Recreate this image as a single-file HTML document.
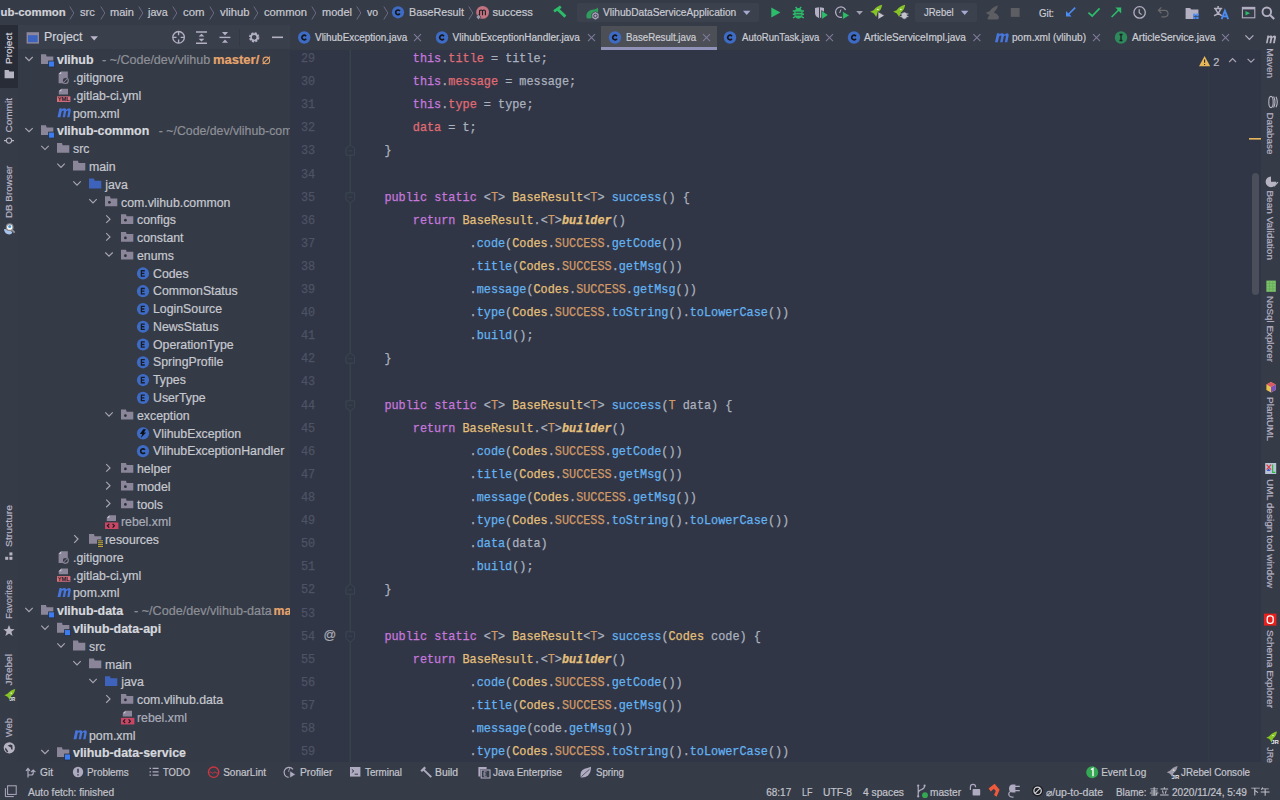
<!DOCTYPE html>
<html><head><meta charset="utf-8"><style>
html,body{margin:0;padding:0;width:1280px;height:800px;overflow:hidden;background:#313646;}
body{position:relative;font-family:"Liberation Sans",sans-serif;}
.t{position:absolute;white-space:pre;transform-origin:0 0;-webkit-text-stroke:0.2px;}
.m{position:absolute;white-space:pre;font-family:"Liberation Mono",monospace;-webkit-text-stroke:0.25px;}
</style></head><body>
<div style="position:absolute;left:0px;top:0px;width:1280px;height:25px;background:#363b48;"></div><div style="position:absolute;left:0px;top:25px;width:18px;height:737px;background:#363b48;"></div><div style="position:absolute;left:0px;top:25px;width:18px;height:63px;background:#282c36;"></div><div style="position:absolute;left:18px;top:25px;width:272px;height:24px;background:#3a3f4c;"></div><div style="position:absolute;left:18px;top:49px;width:272px;height:713px;background:#353a47;"></div><div style="position:absolute;left:290px;top:25px;width:971px;height:25px;background:#363b48;"></div><div style="position:absolute;left:290px;top:50px;width:971px;height:712px;background:#313646;"></div><div style="position:absolute;left:1261px;top:25px;width:19px;height:737px;background:#363b48;"></div><div style="position:absolute;left:0px;top:762px;width:1280px;height:38px;background:#363b48;"></div><div class="t" style="left:0.50px;top:5.68px;font-size:11.4px;line-height:12.736px;color:#d0d2d8;font-weight:bold;">ub-common</div><div class="t" style="left:80.00px;top:5.86px;font-size:11.2px;line-height:12.512px;color:#c8cad0;">src</div><div class="t" style="left:110.00px;top:5.86px;font-size:11.2px;line-height:12.512px;color:#c8cad0;transform:scaleX(0.9875);">main</div><div class="t" style="left:148.27px;top:5.86px;font-size:11.2px;line-height:12.512px;color:#c8cad0;transform:scaleX(0.9575);">java</div><div class="t" style="left:183.00px;top:5.86px;font-size:11.2px;line-height:12.512px;color:#c8cad0;transform:scaleX(1.0157);">com</div><div class="t" style="left:219.50px;top:5.86px;font-size:11.2px;line-height:12.512px;color:#c8cad0;transform:scaleX(1.0072);">vlihub</div><div class="t" style="left:264.00px;top:5.86px;font-size:11.2px;line-height:12.512px;color:#c8cad0;">common</div><div class="t" style="left:322.00px;top:5.86px;font-size:11.2px;line-height:12.512px;color:#c8cad0;transform:scaleX(0.9830);">model</div><div class="t" style="left:367.00px;top:5.86px;font-size:11.2px;line-height:12.512px;color:#c8cad0;transform:scaleX(0.9309);">vo</div><div class="t" style="left:408.50px;top:5.86px;font-size:11.2px;line-height:12.512px;color:#c8cad0;transform:scaleX(0.9601);">BaseResult</div><div class="t" style="left:492.50px;top:5.86px;font-size:11.2px;line-height:12.512px;color:#c8cad0;">success</div><svg style="position:absolute;left:69px;top:5px;" width="6" height="16" viewBox="0 0 6 16"><path d="M0.8 1.5 L4.8 8 L0.8 14.5" fill="none" stroke="#6c6a84" stroke-width="1"/></svg><svg style="position:absolute;left:100px;top:5px;" width="6" height="16" viewBox="0 0 6 16"><path d="M0.8 1.5 L4.8 8 L0.8 14.5" fill="none" stroke="#6c6a84" stroke-width="1"/></svg><svg style="position:absolute;left:138px;top:5px;" width="6" height="16" viewBox="0 0 6 16"><path d="M0.8 1.5 L4.8 8 L0.8 14.5" fill="none" stroke="#6c6a84" stroke-width="1"/></svg><svg style="position:absolute;left:172px;top:5px;" width="6" height="16" viewBox="0 0 6 16"><path d="M0.8 1.5 L4.8 8 L0.8 14.5" fill="none" stroke="#6c6a84" stroke-width="1"/></svg><svg style="position:absolute;left:209px;top:5px;" width="6" height="16" viewBox="0 0 6 16"><path d="M0.8 1.5 L4.8 8 L0.8 14.5" fill="none" stroke="#6c6a84" stroke-width="1"/></svg><svg style="position:absolute;left:253px;top:5px;" width="6" height="16" viewBox="0 0 6 16"><path d="M0.8 1.5 L4.8 8 L0.8 14.5" fill="none" stroke="#6c6a84" stroke-width="1"/></svg><svg style="position:absolute;left:311px;top:5px;" width="6" height="16" viewBox="0 0 6 16"><path d="M0.8 1.5 L4.8 8 L0.8 14.5" fill="none" stroke="#6c6a84" stroke-width="1"/></svg><svg style="position:absolute;left:356px;top:5px;" width="6" height="16" viewBox="0 0 6 16"><path d="M0.8 1.5 L4.8 8 L0.8 14.5" fill="none" stroke="#6c6a84" stroke-width="1"/></svg><svg style="position:absolute;left:383px;top:5px;" width="6" height="16" viewBox="0 0 6 16"><path d="M0.8 1.5 L4.8 8 L0.8 14.5" fill="none" stroke="#6c6a84" stroke-width="1"/></svg><svg style="position:absolute;left:468px;top:5px;" width="6" height="16" viewBox="0 0 6 16"><path d="M0.8 1.5 L4.8 8 L0.8 14.5" fill="none" stroke="#6c6a84" stroke-width="1"/></svg><div style="position:absolute;left:577px;top:3px;width:182px;height:19px;background:#3c414e;border-radius:2px;"></div><div class="t" style="left:602.80px;top:6.04px;font-size:11px;line-height:12.289px;color:#c9ccd3;transform:scaleX(0.9229);">VlihubDataServiceApplication</div><div style="position:absolute;left:915px;top:3px;width:62px;height:19px;background:#3c414e;border-radius:2px;"></div><div class="t" style="left:924.30px;top:6.04px;font-size:11px;line-height:12.289px;color:#c9ccd3;transform:scaleX(0.8639);">JRebel</div><div class="t" style="left:1038.60px;top:6.54px;font-size:11px;line-height:12.289px;color:#c9ccd3;transform:scaleX(0.8769);">Git:</div><div class="t" style="left:43.60px;top:30.74px;font-size:12px;line-height:13.406px;color:#cfd1d7;transform:scaleX(1.0289);">Project</div><div style="position:absolute;left:601px;top:26px;width:116px;height:21px;background:#4c4f56;"></div><div style="position:absolute;left:601px;top:47px;width:116px;height:3px;background:#9192b8;"></div><div class="t" style="left:315.20px;top:31.95px;font-size:10px;line-height:11.172px;color:#cbcdd3;transform:scaleX(0.9946);">VlihubException.java</div><div class="t" style="left:452.60px;top:31.95px;font-size:10px;line-height:11.172px;color:#cbcdd3;">VlihubExceptionHandler.java</div><div class="t" style="left:626.00px;top:31.95px;font-size:10px;line-height:11.172px;color:#cbcdd3;transform:scaleX(0.9710);">BaseResult.java</div><div class="t" style="left:742.00px;top:31.95px;font-size:10px;line-height:11.172px;color:#cbcdd3;transform:scaleX(0.9597);">AutoRunTask.java</div><div class="t" style="left:864.40px;top:31.95px;font-size:10px;line-height:11.172px;color:#cbcdd3;transform:scaleX(1.0079);">ArticleServiceImpl.java</div><div class="t" style="left:1012.20px;top:31.95px;font-size:10px;line-height:11.172px;color:#cbcdd3;transform:scaleX(1.0089);">pom.xml (vlihub)</div><div class="t" style="left:1132.00px;top:31.95px;font-size:10px;line-height:11.172px;color:#cbcdd3;transform:scaleX(1.0134);">ArticleService.java</div><div style="position:absolute;left:18px;top:49px;width:272px;height:713px;overflow:hidden"><div class="t" style="left:39.00px;top:5.27px;font-size:12.4px;line-height:13.853px;color:#d6d8dd;font-weight:bold;">vlihub</div><div class="t" style="left:83.75px;top:5.37px;font-size:12.3px;line-height:13.741px;color:#8d9096;transform:scaleX(1.0185);">- ~/Code/dev/vlihub</div><div class="t" style="left:194.50px;top:5.37px;font-size:12.3px;line-height:13.741px;color:#e5a46b;font-weight:bold;transform:scaleX(1.0574);">master/</div><div class="t" style="left:55.00px;top:23.14px;font-size:12.3px;line-height:13.741px;color:#c6c9cf;">.gitignore</div><div class="t" style="left:55.00px;top:40.91px;font-size:12.3px;line-height:13.741px;color:#c6c9cf;">.gitlab-ci.yml</div><div class="t" style="left:55.00px;top:58.68px;font-size:12.3px;line-height:13.741px;color:#c6c9cf;">pom.xml</div><div class="t" style="left:39.00px;top:76.35px;font-size:12.4px;line-height:13.853px;color:#d6d8dd;font-weight:bold;">vlihub-common</div><div class="t" style="left:140.80px;top:76.45px;font-size:12.3px;line-height:13.741px;color:#8d9096;">- ~/Code/dev/vlihub-common</div><div class="t" style="left:55.00px;top:94.22px;font-size:12.3px;line-height:13.741px;color:#c6c9cf;">src</div><div class="t" style="left:71.00px;top:111.99px;font-size:12.3px;line-height:13.741px;color:#c6c9cf;">main</div><div class="t" style="left:87.31px;top:129.76px;font-size:12.3px;line-height:13.741px;color:#c6c9cf;">java</div><div class="t" style="left:103.00px;top:147.53px;font-size:12.3px;line-height:13.741px;color:#c6c9cf;">com.vlihub.common</div><div class="t" style="left:119.00px;top:165.30px;font-size:12.3px;line-height:13.741px;color:#c6c9cf;">configs</div><div class="t" style="left:119.00px;top:183.07px;font-size:12.3px;line-height:13.741px;color:#c6c9cf;">constant</div><div class="t" style="left:119.00px;top:200.84px;font-size:12.3px;line-height:13.741px;color:#c6c9cf;">enums</div><div class="t" style="left:135.00px;top:218.61px;font-size:12.3px;line-height:13.741px;color:#c6c9cf;">Codes</div><div class="t" style="left:135.00px;top:236.38px;font-size:12.3px;line-height:13.741px;color:#c6c9cf;">CommonStatus</div><div class="t" style="left:135.00px;top:254.15px;font-size:12.3px;line-height:13.741px;color:#c6c9cf;">LoginSource</div><div class="t" style="left:135.00px;top:271.92px;font-size:12.3px;line-height:13.741px;color:#c6c9cf;">NewsStatus</div><div class="t" style="left:135.00px;top:289.69px;font-size:12.3px;line-height:13.741px;color:#c6c9cf;">OperationType</div><div class="t" style="left:135.00px;top:307.46px;font-size:12.3px;line-height:13.741px;color:#c6c9cf;">SpringProfile</div><div class="t" style="left:135.00px;top:325.23px;font-size:12.3px;line-height:13.741px;color:#c6c9cf;">Types</div><div class="t" style="left:135.00px;top:343.00px;font-size:12.3px;line-height:13.741px;color:#c6c9cf;">UserType</div><div class="t" style="left:119.00px;top:360.77px;font-size:12.3px;line-height:13.741px;color:#c6c9cf;">exception</div><div class="t" style="left:135.00px;top:378.54px;font-size:12.3px;line-height:13.741px;color:#c6c9cf;">VlihubException</div><div class="t" style="left:135.00px;top:396.31px;font-size:12.3px;line-height:13.741px;color:#c6c9cf;">VlihubExceptionHandler</div><div class="t" style="left:119.00px;top:414.08px;font-size:12.3px;line-height:13.741px;color:#c6c9cf;">helper</div><div class="t" style="left:119.00px;top:431.85px;font-size:12.3px;line-height:13.741px;color:#c6c9cf;">model</div><div class="t" style="left:119.00px;top:449.62px;font-size:12.3px;line-height:13.741px;color:#c6c9cf;">tools</div><div class="t" style="left:103.00px;top:467.39px;font-size:12.3px;line-height:13.741px;color:#a9adb8;">rebel.xml</div><div class="t" style="left:87.00px;top:485.16px;font-size:12.3px;line-height:13.741px;color:#c6c9cf;">resources</div><div class="t" style="left:55.00px;top:502.93px;font-size:12.3px;line-height:13.741px;color:#c6c9cf;">.gitignore</div><div class="t" style="left:55.00px;top:520.70px;font-size:12.3px;line-height:13.741px;color:#c6c9cf;">.gitlab-ci.yml</div><div class="t" style="left:55.00px;top:538.47px;font-size:12.3px;line-height:13.741px;color:#c6c9cf;">pom.xml</div><div class="t" style="left:39.00px;top:556.14px;font-size:12.4px;line-height:13.853px;color:#d6d8dd;font-weight:bold;">vlihub-data</div><div class="t" style="left:115.90px;top:556.24px;font-size:12.3px;line-height:13.741px;color:#8d9096;transform:scaleX(1.0247);">- ~/Code/dev/vlihub-data</div><div class="t" style="left:255.60px;top:556.24px;font-size:12.3px;line-height:13.741px;color:#e5a46b;font-weight:bold;">master/</div><div class="t" style="left:55.00px;top:573.91px;font-size:12.4px;line-height:13.853px;color:#d6d8dd;font-weight:bold;">vlihub-data-api</div><div class="t" style="left:71.00px;top:591.78px;font-size:12.3px;line-height:13.741px;color:#c6c9cf;">src</div><div class="t" style="left:87.00px;top:609.55px;font-size:12.3px;line-height:13.741px;color:#c6c9cf;">main</div><div class="t" style="left:103.31px;top:627.32px;font-size:12.3px;line-height:13.741px;color:#c6c9cf;">java</div><div class="t" style="left:119.00px;top:645.09px;font-size:12.3px;line-height:13.741px;color:#c6c9cf;">com.vlihub.data</div><div class="t" style="left:119.00px;top:662.86px;font-size:12.3px;line-height:13.741px;color:#a9adb8;">rebel.xml</div><div class="t" style="left:71.00px;top:680.63px;font-size:12.3px;line-height:13.741px;color:#c6c9cf;">pom.xml</div><div class="t" style="left:55.00px;top:698.30px;font-size:12.4px;line-height:13.853px;color:#d6d8dd;font-weight:bold;">vlihub-data-service</div></div><div class="m" style="left:301px;top:51.98px;font-size:13.0px;line-height:14.727px;color:#4d5364;transform-origin:0 0;transform:scaleX(0.9101)">29</div><div class="m" style="left:301px;top:75.08px;font-size:13.0px;line-height:14.727px;color:#4d5364;transform-origin:0 0;transform:scaleX(0.9101)">30</div><div class="m" style="left:301px;top:98.19px;font-size:13.0px;line-height:14.727px;color:#4d5364;transform-origin:0 0;transform:scaleX(0.9101)">31</div><div class="m" style="left:301px;top:121.29px;font-size:13.0px;line-height:14.727px;color:#4d5364;transform-origin:0 0;transform:scaleX(0.9101)">32</div><div class="m" style="left:301px;top:144.40px;font-size:13.0px;line-height:14.727px;color:#4d5364;transform-origin:0 0;transform:scaleX(0.9101)">33</div><div class="m" style="left:301px;top:167.50px;font-size:13.0px;line-height:14.727px;color:#4d5364;transform-origin:0 0;transform:scaleX(0.9101)">34</div><div class="m" style="left:301px;top:190.61px;font-size:13.0px;line-height:14.727px;color:#4d5364;transform-origin:0 0;transform:scaleX(0.9101)">35</div><div class="m" style="left:301px;top:213.71px;font-size:13.0px;line-height:14.727px;color:#4d5364;transform-origin:0 0;transform:scaleX(0.9101)">36</div><div class="m" style="left:301px;top:236.82px;font-size:13.0px;line-height:14.727px;color:#4d5364;transform-origin:0 0;transform:scaleX(0.9101)">37</div><div class="m" style="left:301px;top:259.92px;font-size:13.0px;line-height:14.727px;color:#4d5364;transform-origin:0 0;transform:scaleX(0.9101)">38</div><div class="m" style="left:301px;top:283.03px;font-size:13.0px;line-height:14.727px;color:#4d5364;transform-origin:0 0;transform:scaleX(0.9101)">39</div><div class="m" style="left:301px;top:306.13px;font-size:13.0px;line-height:14.727px;color:#4d5364;transform-origin:0 0;transform:scaleX(0.9101)">40</div><div class="m" style="left:301px;top:329.24px;font-size:13.0px;line-height:14.727px;color:#4d5364;transform-origin:0 0;transform:scaleX(0.9101)">41</div><div class="m" style="left:301px;top:352.34px;font-size:13.0px;line-height:14.727px;color:#4d5364;transform-origin:0 0;transform:scaleX(0.9101)">42</div><div class="m" style="left:301px;top:375.45px;font-size:13.0px;line-height:14.727px;color:#4d5364;transform-origin:0 0;transform:scaleX(0.9101)">43</div><div class="m" style="left:301px;top:398.55px;font-size:13.0px;line-height:14.727px;color:#4d5364;transform-origin:0 0;transform:scaleX(0.9101)">44</div><div class="m" style="left:301px;top:421.66px;font-size:13.0px;line-height:14.727px;color:#4d5364;transform-origin:0 0;transform:scaleX(0.9101)">45</div><div class="m" style="left:301px;top:444.76px;font-size:13.0px;line-height:14.727px;color:#4d5364;transform-origin:0 0;transform:scaleX(0.9101)">46</div><div class="m" style="left:301px;top:467.87px;font-size:13.0px;line-height:14.727px;color:#4d5364;transform-origin:0 0;transform:scaleX(0.9101)">47</div><div class="m" style="left:301px;top:490.97px;font-size:13.0px;line-height:14.727px;color:#4d5364;transform-origin:0 0;transform:scaleX(0.9101)">48</div><div class="m" style="left:301px;top:514.08px;font-size:13.0px;line-height:14.727px;color:#4d5364;transform-origin:0 0;transform:scaleX(0.9101)">49</div><div class="m" style="left:301px;top:537.18px;font-size:13.0px;line-height:14.727px;color:#4d5364;transform-origin:0 0;transform:scaleX(0.9101)">50</div><div class="m" style="left:301px;top:560.29px;font-size:13.0px;line-height:14.727px;color:#4d5364;transform-origin:0 0;transform:scaleX(0.9101)">51</div><div class="m" style="left:301px;top:583.39px;font-size:13.0px;line-height:14.727px;color:#4d5364;transform-origin:0 0;transform:scaleX(0.9101)">52</div><div class="m" style="left:301px;top:606.50px;font-size:13.0px;line-height:14.727px;color:#4d5364;transform-origin:0 0;transform:scaleX(0.9101)">53</div><div class="m" style="left:301px;top:629.60px;font-size:13.0px;line-height:14.727px;color:#4d5364;transform-origin:0 0;transform:scaleX(0.9101)">54</div><div class="m" style="left:301px;top:652.71px;font-size:13.0px;line-height:14.727px;color:#4d5364;transform-origin:0 0;transform:scaleX(0.9101)">55</div><div class="m" style="left:301px;top:675.81px;font-size:13.0px;line-height:14.727px;color:#4d5364;transform-origin:0 0;transform:scaleX(0.9101)">56</div><div class="m" style="left:301px;top:698.92px;font-size:13.0px;line-height:14.727px;color:#4d5364;transform-origin:0 0;transform:scaleX(0.9101)">57</div><div class="m" style="left:301px;top:722.02px;font-size:13.0px;line-height:14.727px;color:#4d5364;transform-origin:0 0;transform:scaleX(0.9101)">58</div><div class="m" style="left:301px;top:745.13px;font-size:13.0px;line-height:14.727px;color:#4d5364;transform-origin:0 0;transform:scaleX(0.9101)">59</div><div class="m" style="left:355.60px;top:51.98px;font-size:13.0px;line-height:14.727px;color:#abb2bf;transform-origin:0 0;transform:scaleX(0.9101)">        <span style="color:#c678dd">this</span>.<span style="color:#e06c75">title</span> = title;</div><div class="m" style="left:355.60px;top:75.08px;font-size:13.0px;line-height:14.727px;color:#abb2bf;transform-origin:0 0;transform:scaleX(0.9101)">        <span style="color:#c678dd">this</span>.<span style="color:#e06c75">message</span> = message;</div><div class="m" style="left:355.60px;top:98.19px;font-size:13.0px;line-height:14.727px;color:#abb2bf;transform-origin:0 0;transform:scaleX(0.9101)">        <span style="color:#c678dd">this</span>.<span style="color:#e06c75">type</span> = type;</div><div class="m" style="left:355.60px;top:121.29px;font-size:13.0px;line-height:14.727px;color:#abb2bf;transform-origin:0 0;transform:scaleX(0.9101)">        <span style="color:#e06c75">data</span> = t;</div><div class="m" style="left:355.60px;top:144.40px;font-size:13.0px;line-height:14.727px;color:#abb2bf;transform-origin:0 0;transform:scaleX(0.9101)">    }</div><div class="m" style="left:355.60px;top:190.61px;font-size:13.0px;line-height:14.727px;color:#abb2bf;transform-origin:0 0;transform:scaleX(0.9101)">    <span style="color:#c678dd">public</span> <span style="color:#c678dd">static</span> &lt;<span style="color:#d19a66">T</span>&gt; <span style="color:#e5c07b">BaseResult</span>&lt;<span style="color:#d19a66">T</span>&gt; <span style="color:#63b3f2">success</span>() {</div><div class="m" style="left:355.60px;top:213.71px;font-size:13.0px;line-height:14.727px;color:#abb2bf;transform-origin:0 0;transform:scaleX(0.9101)">        <span style="color:#c678dd">return</span> <span style="color:#e5c07b">BaseResult</span>.&lt;<span style="color:#d19a66">T</span>&gt;<span style="color:#e5c07b;font-style:italic;font-weight:bold">builder</span>()</div><div class="m" style="left:355.60px;top:236.82px;font-size:13.0px;line-height:14.727px;color:#abb2bf;transform-origin:0 0;transform:scaleX(0.9101)">                .<span style="color:#63b3f2">code</span>(<span style="color:#e5c07b">Codes</span>.<span style="color:#d19a66">SUCCESS</span>.<span style="color:#63b3f2">getCode</span>())</div><div class="m" style="left:355.60px;top:259.92px;font-size:13.0px;line-height:14.727px;color:#abb2bf;transform-origin:0 0;transform:scaleX(0.9101)">                .<span style="color:#63b3f2">title</span>(<span style="color:#e5c07b">Codes</span>.<span style="color:#d19a66">SUCCESS</span>.<span style="color:#63b3f2">getMsg</span>())</div><div class="m" style="left:355.60px;top:283.03px;font-size:13.0px;line-height:14.727px;color:#abb2bf;transform-origin:0 0;transform:scaleX(0.9101)">                .<span style="color:#63b3f2">message</span>(<span style="color:#e5c07b">Codes</span>.<span style="color:#d19a66">SUCCESS</span>.<span style="color:#63b3f2">getMsg</span>())</div><div class="m" style="left:355.60px;top:306.13px;font-size:13.0px;line-height:14.727px;color:#abb2bf;transform-origin:0 0;transform:scaleX(0.9101)">                .<span style="color:#63b3f2">type</span>(<span style="color:#e5c07b">Codes</span>.<span style="color:#d19a66">SUCCESS</span>.<span style="color:#63b3f2">toString</span>().<span style="color:#63b3f2">toLowerCase</span>())</div><div class="m" style="left:355.60px;top:329.24px;font-size:13.0px;line-height:14.727px;color:#abb2bf;transform-origin:0 0;transform:scaleX(0.9101)">                .<span style="color:#63b3f2">build</span>();</div><div class="m" style="left:355.60px;top:352.34px;font-size:13.0px;line-height:14.727px;color:#abb2bf;transform-origin:0 0;transform:scaleX(0.9101)">    }</div><div class="m" style="left:355.60px;top:398.55px;font-size:13.0px;line-height:14.727px;color:#abb2bf;transform-origin:0 0;transform:scaleX(0.9101)">    <span style="color:#c678dd">public</span> <span style="color:#c678dd">static</span> &lt;<span style="color:#d19a66">T</span>&gt; <span style="color:#e5c07b">BaseResult</span>&lt;<span style="color:#d19a66">T</span>&gt; <span style="color:#63b3f2">success</span>(<span style="color:#d19a66">T</span> data) {</div><div class="m" style="left:355.60px;top:421.66px;font-size:13.0px;line-height:14.727px;color:#abb2bf;transform-origin:0 0;transform:scaleX(0.9101)">        <span style="color:#c678dd">return</span> <span style="color:#e5c07b">BaseResult</span>.&lt;<span style="color:#d19a66">T</span>&gt;<span style="color:#e5c07b;font-style:italic;font-weight:bold">builder</span>()</div><div class="m" style="left:355.60px;top:444.76px;font-size:13.0px;line-height:14.727px;color:#abb2bf;transform-origin:0 0;transform:scaleX(0.9101)">                .<span style="color:#63b3f2">code</span>(<span style="color:#e5c07b">Codes</span>.<span style="color:#d19a66">SUCCESS</span>.<span style="color:#63b3f2">getCode</span>())</div><div class="m" style="left:355.60px;top:467.87px;font-size:13.0px;line-height:14.727px;color:#abb2bf;transform-origin:0 0;transform:scaleX(0.9101)">                .<span style="color:#63b3f2">title</span>(<span style="color:#e5c07b">Codes</span>.<span style="color:#d19a66">SUCCESS</span>.<span style="color:#63b3f2">getMsg</span>())</div><div class="m" style="left:355.60px;top:490.97px;font-size:13.0px;line-height:14.727px;color:#abb2bf;transform-origin:0 0;transform:scaleX(0.9101)">                .<span style="color:#63b3f2">message</span>(<span style="color:#e5c07b">Codes</span>.<span style="color:#d19a66">SUCCESS</span>.<span style="color:#63b3f2">getMsg</span>())</div><div class="m" style="left:355.60px;top:514.08px;font-size:13.0px;line-height:14.727px;color:#abb2bf;transform-origin:0 0;transform:scaleX(0.9101)">                .<span style="color:#63b3f2">type</span>(<span style="color:#e5c07b">Codes</span>.<span style="color:#d19a66">SUCCESS</span>.<span style="color:#63b3f2">toString</span>().<span style="color:#63b3f2">toLowerCase</span>())</div><div class="m" style="left:355.60px;top:537.18px;font-size:13.0px;line-height:14.727px;color:#abb2bf;transform-origin:0 0;transform:scaleX(0.9101)">                .<span style="color:#63b3f2">data</span>(data)</div><div class="m" style="left:355.60px;top:560.29px;font-size:13.0px;line-height:14.727px;color:#abb2bf;transform-origin:0 0;transform:scaleX(0.9101)">                .<span style="color:#63b3f2">build</span>();</div><div class="m" style="left:355.60px;top:583.39px;font-size:13.0px;line-height:14.727px;color:#abb2bf;transform-origin:0 0;transform:scaleX(0.9101)">    }</div><div class="m" style="left:355.60px;top:629.60px;font-size:13.0px;line-height:14.727px;color:#abb2bf;transform-origin:0 0;transform:scaleX(0.9101)">    <span style="color:#c678dd">public</span> <span style="color:#c678dd">static</span> &lt;<span style="color:#d19a66">T</span>&gt; <span style="color:#e5c07b">BaseResult</span>&lt;<span style="color:#d19a66">T</span>&gt; <span style="color:#63b3f2">success</span>(<span style="color:#e5c07b">Codes</span> code) {</div><div class="m" style="left:355.60px;top:652.71px;font-size:13.0px;line-height:14.727px;color:#abb2bf;transform-origin:0 0;transform:scaleX(0.9101)">        <span style="color:#c678dd">return</span> <span style="color:#e5c07b">BaseResult</span>.&lt;<span style="color:#d19a66">T</span>&gt;<span style="color:#e5c07b;font-style:italic;font-weight:bold">builder</span>()</div><div class="m" style="left:355.60px;top:675.81px;font-size:13.0px;line-height:14.727px;color:#abb2bf;transform-origin:0 0;transform:scaleX(0.9101)">                .<span style="color:#63b3f2">code</span>(<span style="color:#e5c07b">Codes</span>.<span style="color:#d19a66">SUCCESS</span>.<span style="color:#63b3f2">getCode</span>())</div><div class="m" style="left:355.60px;top:698.92px;font-size:13.0px;line-height:14.727px;color:#abb2bf;transform-origin:0 0;transform:scaleX(0.9101)">                .<span style="color:#63b3f2">title</span>(<span style="color:#e5c07b">Codes</span>.<span style="color:#d19a66">SUCCESS</span>.<span style="color:#63b3f2">getMsg</span>())</div><div class="m" style="left:355.60px;top:722.02px;font-size:13.0px;line-height:14.727px;color:#abb2bf;transform-origin:0 0;transform:scaleX(0.9101)">                .<span style="color:#63b3f2">message</span>(code.<span style="color:#63b3f2">getMsg</span>())</div><div class="m" style="left:355.60px;top:745.13px;font-size:13.0px;line-height:14.727px;color:#abb2bf;transform-origin:0 0;transform:scaleX(0.9101)">                .<span style="color:#63b3f2">type</span>(<span style="color:#e5c07b">Codes</span>.<span style="color:#d19a66">SUCCESS</span>.<span style="color:#63b3f2">toString</span>().<span style="color:#63b3f2">toLowerCase</span>())</div><div class="t" style="left:323.6px;top:628.22px;font-size:12.5px;line-height:14px;color:#a9abb3">@</div><div class="t" style="left:1213.20px;top:55.64px;font-size:11px;line-height:12.289px;color:#b8bac2;">2</div><div class="t" style="left:40.20px;top:767.15px;font-size:10px;line-height:11.172px;color:#c3c5cc;transform:scaleX(1.0156);">Git</div><div class="t" style="left:87.40px;top:767.15px;font-size:10px;line-height:11.172px;color:#c3c5cc;transform:scaleX(0.9893);">Problems</div><div class="t" style="left:163.20px;top:767.15px;font-size:10px;line-height:11.172px;color:#c3c5cc;transform:scaleX(0.9408);">TODO</div><div class="t" style="left:223.20px;top:767.15px;font-size:10px;line-height:11.172px;color:#c3c5cc;">SonarLint</div><div class="t" style="left:299.60px;top:767.15px;font-size:10px;line-height:11.172px;color:#c3c5cc;transform:scaleX(1.0221);">Profiler</div><div class="t" style="left:365.20px;top:767.15px;font-size:10px;line-height:11.172px;color:#c3c5cc;transform:scaleX(0.9788);">Terminal</div><div class="t" style="left:435.20px;top:767.15px;font-size:10px;line-height:11.172px;color:#c3c5cc;transform:scaleX(1.0337);">Build</div><div class="t" style="left:493.40px;top:767.15px;font-size:10px;line-height:11.172px;color:#c3c5cc;transform:scaleX(0.9928);">Java Enterprise</div><div class="t" style="left:596.20px;top:767.15px;font-size:10px;line-height:11.172px;color:#c3c5cc;transform:scaleX(0.9689);">Spring</div><div class="t" style="left:1101.20px;top:767.15px;font-size:10px;line-height:11.172px;color:#c3c5cc;">Event Log</div><div class="t" style="left:1181.40px;top:767.15px;font-size:10px;line-height:11.172px;color:#c3c5cc;transform:scaleX(0.9773);">JRebel Console</div><div class="t" style="left:28.20px;top:786.55px;font-size:10px;line-height:11.172px;color:#c1c3ca;transform:scaleX(1.0112);">Auto fetch: finished</div><div class="t" style="left:766.20px;top:786.55px;font-size:10px;line-height:11.172px;color:#c1c3ca;">68:17</div><div class="t" style="left:802.20px;top:786.55px;font-size:10px;line-height:11.172px;color:#c1c3ca;transform:scaleX(0.8927);">LF</div><div class="t" style="left:823.20px;top:786.55px;font-size:10px;line-height:11.172px;color:#c1c3ca;transform:scaleX(1.0229);">UTF-8</div><div class="t" style="left:863.20px;top:786.55px;font-size:10px;line-height:11.172px;color:#c1c3ca;transform:scaleX(1.0237);">4 spaces</div><div class="t" style="left:930.40px;top:786.55px;font-size:10px;line-height:11.172px;color:#c1c3ca;transform:scaleX(1.0147);">master</div><div class="t" style="left:1046.20px;top:786.55px;font-size:10px;line-height:11.172px;color:#c1c3ca;transform:scaleX(1.0492);">⌀/up-to-date</div><div class="t" style="left:1116.00px;top:786.55px;font-size:10px;line-height:11.172px;color:#c1c3ca;transform:scaleX(0.9807);">Blame:</div><div class="t" style="left:1171.90px;top:786.55px;font-size:10px;line-height:11.172px;color:#c1c3ca;transform:scaleX(1.0074);">2020/11/24, 5:49</div><div class="t" style="left:0;top:0;font-size:9.8px;line-height:10.948px;color:#d2d0dc;transform-origin:0 0;transform:translate(12.80px,64.00px) rotate(-90deg) scaleX(1.0237) translateY(-8.87px);">Project</div><div class="t" style="left:0;top:0;font-size:9.8px;line-height:10.948px;color:#b6b3c3;transform-origin:0 0;transform:translate(12.80px,132.60px) rotate(-90deg) scaleX(1.0249) translateY(-8.87px);">Commit</div><div class="t" style="left:0;top:0;font-size:9.8px;line-height:10.948px;color:#b6b3c3;transform-origin:0 0;transform:translate(12.80px,218.00px) rotate(-90deg) scaleX(1.0022) translateY(-8.87px);">DB Browser</div><div class="t" style="left:0;top:0;font-size:9.8px;line-height:10.948px;color:#b6b3c3;transform-origin:0 0;transform:translate(12.80px,547.00px) rotate(-90deg) scaleX(1.0569) translateY(-8.87px);">Structure</div><div class="t" style="left:0;top:0;font-size:9.8px;line-height:10.948px;color:#b6b3c3;transform-origin:0 0;transform:translate(12.80px,619.00px) rotate(-90deg) scaleX(0.9683) translateY(-8.87px);">Favorites</div><div class="t" style="left:0;top:0;font-size:9.8px;line-height:10.948px;color:#b6b3c3;transform-origin:0 0;transform:translate(12.80px,685.40px) rotate(-90deg) scaleX(1.0286) translateY(-8.87px);">JRebel</div><div class="t" style="left:0;top:0;font-size:9.8px;line-height:10.948px;color:#b6b3c3;transform-origin:0 0;transform:translate(12.80px,737.20px) rotate(-90deg) scaleX(0.9604) translateY(-8.87px);">Web</div><div class="t" style="left:0;top:0;font-size:9.8px;line-height:10.948px;color:#b6b3c3;transform-origin:0 0;transform:translate(1266.60px,48.20px) rotate(90deg) scaleX(1.0136) translateY(-8.87px);">Maven</div><div class="t" style="left:0;top:0;font-size:9.8px;line-height:10.948px;color:#b6b3c3;transform-origin:0 0;transform:translate(1266.60px,112.40px) rotate(90deg) scaleX(1.0013) translateY(-8.87px);">Database</div><div class="t" style="left:0;top:0;font-size:9.8px;line-height:10.948px;color:#b6b3c3;transform-origin:0 0;transform:translate(1266.60px,190.40px) rotate(90deg) scaleX(1.0248) translateY(-8.87px);">Bean Validation</div><div class="t" style="left:0;top:0;font-size:9.8px;line-height:10.948px;color:#b6b3c3;transform-origin:0 0;transform:translate(1266.60px,296.00px) rotate(90deg) scaleX(1.0014) translateY(-8.87px);">NoSql Explorer</div><div class="t" style="left:0;top:0;font-size:9.8px;line-height:10.948px;color:#b6b3c3;transform-origin:0 0;transform:translate(1266.60px,397.00px) rotate(90deg) scaleX(1.0227) translateY(-8.87px);">PlantUML</div><div class="t" style="left:0;top:0;font-size:9.8px;line-height:10.948px;color:#b6b3c3;transform-origin:0 0;transform:translate(1266.60px,479.00px) rotate(90deg) scaleX(1.0294) translateY(-8.87px);">UML design tool window</div><div class="t" style="left:0;top:0;font-size:9.8px;line-height:10.948px;color:#b6b3c3;transform-origin:0 0;transform:translate(1266.60px,630.00px) rotate(90deg) scaleX(1.0404) translateY(-8.87px);">Schema Explorer</div><div class="t" style="left:0;top:0;font-size:9.8px;line-height:10.948px;color:#b6b3c3;transform-origin:0 0;transform:translate(1266.60px,747.20px) rotate(90deg) scaleX(0.9058) translateY(-8.87px);">JRe</div>
<svg style="position:absolute;left:0;top:0" width="1280" height="800" viewBox="0 0 1280 800"><circle cx="398" cy="12.3" r="6.1" fill="#3e6bc4"/><path d="M399.9 11.0 A2.3 2.3 0 1 0 399.9 13.600000000000001" fill="none" stroke="#15171e" stroke-width="1.7"/><circle cx="482.6" cy="12.4" r="6.4" fill="#c2737f"/><path d="M479.6 15.2 V10.2 M479.6 11.5 Q479.6 10 481 10 Q482.5 10 482.5 11.5 V15.2 M482.5 11.5 Q482.5 10 483.9 10 Q485.4 10 485.4 11.5 V15.2" fill="none" stroke="#1b1d26" stroke-width="1.1"/><rect x="476.7" y="15.3" width="3.6" height="3.6" transform="rotate(45 478.5 17.1)" fill="#9a97aa" stroke="#333845" stroke-width="0.6"/><path d="M554 11.4 L560.8 6.6" stroke="#2dbd6a" stroke-width="2.7"/><path d="M557.4 9 L565.4 16.6" stroke="#2dbd6a" stroke-width="2.9"/><path d="M586.8 18.2 C585.4 13.8 588 10.4 592.4 9.8 C594.8 9.5 596.6 8.8 597.8 7.4 C598.8 11 598 14.2 595.6 16.2 C593 18.4 589.6 18.8 586.8 18.2 Z" fill="#2f9e5c"/><path d="M595.4 11.6 L599 13.7 V17.9 L595.4 20 L591.8 17.9 V13.7 Z" fill="#aaa5bd" stroke="#3c414e" stroke-width="0.8"/><circle cx="595.4" cy="15.8" r="1.7" fill="none" stroke="#3c414e" stroke-width="1"/><path d="M743 10.8 H750.4 L746.7 15 Z" fill="#a6aad0"/><path d="M771.3 7.5 L780.4 12.5 L771.3 17.5 Z" fill="#2dbd6a"/><g fill="none" stroke="#2dbd6a" stroke-width="1.4"><ellipse cx="798.4" cy="13.4" rx="3.6" ry="4.6" fill="#2dbd6a"/><path d="M795.6 7 L797.3 9 M801.2 7 L799.5 9 M792.8 11 H795 M801.8 11 H804 M792.8 14.2 H795 M801.8 14.2 H804 M793 17.8 L795.3 16.6 M803.8 17.8 L801.5 16.6"/></g><path d="M795.5 12.2 H801.3 M795.5 15 H801.3" stroke="#333845" stroke-width="1"/><path d="M815 8 Q819.5 6.4 824 8 V13 Q824 16.8 819.5 18.2 Q815 16.8 815 13 Z" fill="#b3b0c3"/><path d="M819.5 7.2 V18" stroke="#333845" stroke-width="0.9"/><path d="M821.6 10.6 L828.4 15 L821.6 19.6 Z" fill="#2dbd6a" stroke="#333845" stroke-width="0.7"/><path d="M845.6 10 A5.2 5.2 0 1 0 842 17.2" fill="none" stroke="#b3b0c3" stroke-width="1.3"/><path d="M841 9.5 L839.6 13" stroke="#b3b0c3" stroke-width="1"/><path d="M842.6 11.2 L849.6 15.4 L842.6 19.6 Z" fill="#2dbd6a" stroke="#333845" stroke-width="0.7"/><path d="M856.2 11 H863 L859.6 14.8 Z" fill="#a09fb4"/><path d="M882.2 4.8 C881.6 8.6 880.2 10.8 877.8 12.6 L876.2 17 L874.4 14.2 L873.2 13 L870.2 11.8 L873.6 10.2 C875.6 7.6 878.6 5.4 882.2 4.8 Z" fill="#86c426"/><ellipse cx="877.8" cy="9.4" rx="1" ry="0.7" fill="#e8f3d0"/><path d="M878 11.6 L884.6 15.6 L878 19.6 Z" fill="#c4c3cc" stroke="#333845" stroke-width="0.7"/><path d="M905.2 4.8 C904.6 8.6 903.2 10.8 900.8 12.6 L899.2 17 L897.4 14.2 L896.2 13 L893.2 11.8 L896.6 10.2 C898.6 7.6 901.6 5.4 905.2 4.8 Z" fill="#86c426"/><ellipse cx="900.8" cy="9.4" rx="1" ry="0.7" fill="#e8f3d0"/><ellipse cx="904.3" cy="15.6" rx="3" ry="3.6" fill="#c4c3cc" stroke="#333845" stroke-width="0.6"/><path d="M900.2 14 H908.4 M900.2 16.6 H908.4" stroke="#c4c3cc" stroke-width="0.9"/><path d="M961 10.8 H968.4 L964.7 15 Z" fill="#a6aad0"/><path d="M998 5.6 Q997.2 10 993.8 12.6 Q997.6 13.8 998.8 16.6 Q999.4 19.4 997 19.4 H989.4 Q987 19.4 987.8 17.4 L989.6 15.2 L985.6 12.8 L989.6 11.2 Q993 6.8 998 5.6 Z" fill="#5d5e62"/><rect x="1010.8" y="8" width="8.8" height="8.9" fill="#5d5e62"/><path d="M1075.2 7.6 L1067.6 15.2" stroke="#4b8cf4" stroke-width="1.6"/><path d="M1066 11 V16.6 H1071.6 Z" fill="#4b8cf4"/><path d="M1088.4 12.6 L1092.2 16 L1099.6 8.4" fill="none" stroke="#2dbd6a" stroke-width="1.7"/><path d="M1111.6 17 L1119.6 9" stroke="#2dbd6a" stroke-width="1.6"/><path d="M1115.4 7.6 H1121.2 V13.4 Z" fill="#2dbd6a"/><circle cx="1139.6" cy="12.4" r="5.7" fill="none" stroke="#b3b0c3" stroke-width="1.3"/><path d="M1139.2 9.2 V12.6 L1141.6 14.6" fill="none" stroke="#b3b0c3" stroke-width="1.2"/><path d="M1159 10.3 H1164.8 Q1168 10.3 1168 13.6 Q1168 16.8 1164.8 16.8 H1161.5 M1161.4 7.4 L1158.4 10.3 L1161.4 13.2" fill="none" stroke="#6a6a6c" stroke-width="1.2"/><path d="M1185.6 8 H1190 L1191.3 9.6 H1198.4 V15 H1193.5 V19 H1185.6 Z" fill="#b3b0c3"/><g fill="#4b8cf4"><rect x="1193.2" y="13.6" width="2.4" height="2.4"/><rect x="1196.2" y="13.6" width="2.4" height="2.4"/><rect x="1193.2" y="16.6" width="2.4" height="2.4"/><rect x="1196.2" y="16.6" width="2.4" height="2.4"/></g><path d="M1214 8.6 H1222.2 M1218.1 6 V8.6 M1215.6 8.8 Q1217 13.6 1221.8 15.6 M1220.6 8.8 Q1219.3 13.8 1214 15.8" fill="none" stroke="#b3b0c3" stroke-width="1.5"/><path d="M1221.6 19.2 L1224.9 10.8 L1228.2 19.2 M1222.7 16.4 H1227.1" fill="none" stroke="#4b8cf4" stroke-width="1.8"/><rect x="1242.4" y="7.4" width="12.4" height="10.4" fill="none" stroke="#b3b0c3" stroke-width="1.1"/><rect x="1242.4" y="7.4" width="12.4" height="2" fill="#b3b0c3"/><path d="M1245.5 11 L1250 13.3 L1245.5 15.6 Z" fill="#2dbd6a"/><circle cx="1266.8" cy="11.8" r="4.3" fill="none" stroke="#b3b0c3" stroke-width="1.9"/><path d="M1270 15 L1274.2 19" stroke="#b3b0c3" stroke-width="2.1"/><rect x="26.6" y="32.2" width="12.4" height="11.4" fill="#8c879c"/><rect x="28" y="35.2" width="9.6" height="7" fill="#3d63c0"/><path d="M90.4 36.2 H98 L94.2 40.6 Z" fill="#b9b5c9"/><circle cx="178.6" cy="37.3" r="5.8" fill="none" stroke="#b3b0c3" stroke-width="1.3"/><path d="M178.6 31.6 V35.2 M178.6 39.4 V43 M172.9 37.3 H176.5 M180.7 37.3 H184.3" stroke="#b3b0c3" stroke-width="1.3"/><path d="M196 32 H207 M196 43.2 H207" stroke="#b3b0c3" stroke-width="1.4"/><path d="M198.6 36.4 L201.5 33.8 L204.4 36.4 Z M198.6 38.8 L201.5 41.4 L204.4 38.8 Z" fill="#b3b0c3"/><path d="M219.5 37.4 H230.4" stroke="#b3b0c3" stroke-width="1.4"/><path d="M222 32 H228 L225 35.4 Z M222 42.8 H228 L225 39.4 Z" fill="#b3b0c3"/><path d="M239.5 29 V46" stroke="#343946" stroke-width="1"/><circle cx="254.2" cy="37.3" r="3.9" fill="none" stroke="#b3b0c3" stroke-width="2.6" stroke-dasharray="1.9 1.16"/><circle cx="254.2" cy="37.3" r="3.2" fill="none" stroke="#b3b0c3" stroke-width="1.6"/><path d="M272 37.3 H283" stroke="#b3b0c3" stroke-width="1.6"/><circle cx="304.2" cy="37.5" r="6.2" fill="#3e6bc4"/><path d="M306.09999999999997 36.2 A2.3 2.3 0 1 0 306.09999999999997 38.8" fill="none" stroke="#15171e" stroke-width="1.7"/><path d="M414 34.2 L421 41.2 M421 34.2 L414 41.2" stroke="#7f7b9a" stroke-width="1.05"/><circle cx="442" cy="37.5" r="6.2" fill="#3e6bc4"/><path d="M443.9 36.2 A2.3 2.3 0 1 0 443.9 38.8" fill="none" stroke="#15171e" stroke-width="1.7"/><path d="M588 34.2 L595 41.2 M595 34.2 L588 41.2" stroke="#7f7b9a" stroke-width="1.05"/><circle cx="615" cy="37.5" r="6.2" fill="#3e6bc4"/><path d="M616.9 36.2 A2.3 2.3 0 1 0 616.9 38.8" fill="none" stroke="#15171e" stroke-width="1.7"/><path d="M703 34.2 L710 41.2 M710 34.2 L703 41.2" stroke="#7f7b9a" stroke-width="1.05"/><circle cx="730" cy="37.5" r="6.2" fill="#3e6bc4"/><path d="M731.9 36.2 A2.3 2.3 0 1 0 731.9 38.8" fill="none" stroke="#15171e" stroke-width="1.7"/><path d="M826 34.2 L833 41.2 M833 34.2 L826 41.2" stroke="#7f7b9a" stroke-width="1.05"/><circle cx="854" cy="37.5" r="6.2" fill="#3e6bc4"/><path d="M855.9 36.2 A2.3 2.3 0 1 0 855.9 38.8" fill="none" stroke="#15171e" stroke-width="1.7"/><path d="M973.4 34.2 L980.4 41.2 M980.4 34.2 L973.4 41.2" stroke="#7f7b9a" stroke-width="1.05"/><path d="M995 42.3 L997 33.2 H999.5 L999.2 34.6 Q1000.8 33 1002.4 33.2 Q1004 33.4 1004.1 34.8 Q1005.8 33 1007.4 33.2 Q1009 33.6 1008.7 35.5 L1007.3 42.3 H1004.8 L1006 36.4 Q1006.1 35.3 1005.2 35.4 Q1004.1 35.6 1003.7 36.8 L1002.6 42.3 H1000.1 L1001.3 36.4 Q1001.4 35.3 1000.5 35.4 Q999.4 35.6 999 36.8 L997.8 42.3 Z" fill="#4776dd"/><path d="M1093 34.2 L1100 41.2 M1100 34.2 L1093 41.2" stroke="#7f7b9a" stroke-width="1.05"/><circle cx="1121" cy="37.5" r="6.2" fill="#2e8a5a"/><path d="M1119.5 34.5 H1122.5 M1121 34.5 V40.5 M1119.5 40.5 H1122.5" fill="none" stroke="#1b1d26" stroke-width="1.3"/><path d="M1222 34.2 L1229 41.2 M1229 34.2 L1222 41.2" stroke="#7f7b9a" stroke-width="1.05"/><path d="M1245.4 35.4 L1249.4 39.4 L1253.4 35.4" fill="none" stroke="#b3b0c3" stroke-width="1.2"/><path d="M25.3 57.0 L29 60.7 L32.7 57.0" fill="none" stroke="#a9a7b5" stroke-width="1.15"/><path d="M41 54.2 H46 L46.6 56.4 H53.3 V64.0 H41 Z" fill="#8a8598"/><rect x="48.6" y="61.0" width="6" height="6" fill="#3b7cf0" stroke="#2a2e38" stroke-width="0.8"/><circle cx="266.3" cy="60.4" r="3.3" fill="none" stroke="#e5a46b" stroke-width="1.1"/><path d="M262.6 64.2 L270 56.6" stroke="#e5a46b" stroke-width="1.1"/><path d="M61.2 71.47 H67.8 V83.27 H58.6 V74.07 Z" fill="#8a8598"/><path d="M58.6 74.07 L61.2 71.47 V74.07 Z" fill="#c9c5d6"/><circle cx="65.3" cy="80.57" r="3" fill="#333845" stroke="#8a8598" stroke-width="1.1"/><path d="M63.6 82.27 L67 78.86999999999999" stroke="#8a8598" stroke-width="1"/><path d="M61.4 88.74000000000001 H68.0 V94.54 H58.8 V91.34 Z" fill="#8a8598"/><path d="M58.8 91.34 L61.4 88.74000000000001 V91.34 Z" fill="#c9c5d6"/><rect x="57" y="96.34" width="13.4" height="5.6" fill="#d9707f"/><text x="63.7" y="101.44000000000001" font-family="Liberation Sans" font-weight="bold" font-size="5.6" fill="#1a1a1f" text-anchor="middle" textLength="12" lengthAdjust="spacingAndGlyphs">YML</text><path d="M57.5 117.31 L59.5 108.31 H61.8 L61.5 109.61 Q63.1 108.01 64.6 108.21000000000001 Q66.2 108.41 66.3 109.81 Q67.9 108.01 69.4 108.21000000000001 Q71.1 108.61 70.8 110.51 L69.5 117.31 H67.2 L68.3 111.41 Q68.4 110.31 67.5 110.41 Q66.5 110.61 66.1 111.81 L65.0 117.31 H62.7 L63.8 111.41 Q63.9 110.31 63.0 110.41 Q62.0 110.61 61.6 111.81 L60.5 117.31 Z" fill="#4675dc"/><path d="M25.3 128.08 L29 131.78 L32.7 128.08" fill="none" stroke="#a9a7b5" stroke-width="1.15"/><path d="M41 125.28000000000002 H46 L46.6 127.48000000000002 H53.3 V135.08 H41 Z" fill="#8a8598"/><rect x="48.6" y="132.08" width="6" height="6" fill="#3b7cf0" stroke="#2a2e38" stroke-width="0.8"/><path d="M41.3 145.85 L45 149.54999999999998 L48.7 145.85" fill="none" stroke="#a9a7b5" stroke-width="1.15"/><path d="M57 143.04999999999998 H62 L62.6 145.25 H69.3 V152.85 H57 Z" fill="#8a8598"/><path d="M57.3 163.62 L61 167.32 L64.7 163.62" fill="none" stroke="#a9a7b5" stroke-width="1.15"/><path d="M73 160.82 H78 L78.6 163.02 H85.3 V170.62 H73 Z" fill="#8a8598"/><path d="M73.3 181.39 L77 185.08999999999997 L80.7 181.39" fill="none" stroke="#a9a7b5" stroke-width="1.15"/><path d="M89 178.58999999999997 H94 L94.6 180.79 H101.3 V188.39 H89 Z" fill="#3d63bd"/><path d="M89.3 199.16 L93 202.85999999999999 L96.7 199.16" fill="none" stroke="#a9a7b5" stroke-width="1.15"/><path d="M105 196.35999999999999 H110 L110.6 198.56 H117.3 V206.16 H105 Z" fill="#8a8598"/><circle cx="109.4" cy="202.35999999999999" r="1.35" fill="#2b2f3a"/><path d="M106.2 215.33 L110 219.13 L106.2 222.93" fill="none" stroke="#a9a7b5" stroke-width="1.15"/><path d="M121 214.13 H126 L126.6 216.33 H133.3 V223.93 H121 Z" fill="#8a8598"/><circle cx="125.4" cy="220.13" r="1.35" fill="#2b2f3a"/><path d="M106.2 233.1 L110 236.89999999999998 L106.2 240.7" fill="none" stroke="#a9a7b5" stroke-width="1.15"/><path d="M121 231.89999999999998 H126 L126.6 234.1 H133.3 V241.7 H121 Z" fill="#8a8598"/><circle cx="125.4" cy="237.89999999999998" r="1.35" fill="#2b2f3a"/><path d="M105.3 252.47000000000003 L109 256.17 L112.7 252.47000000000003" fill="none" stroke="#a9a7b5" stroke-width="1.15"/><path d="M121 249.67000000000002 H126 L126.6 251.87000000000003 H133.3 V259.47 H121 Z" fill="#8a8598"/><circle cx="125.4" cy="255.67000000000002" r="1.35" fill="#2b2f3a"/><circle cx="143" cy="273.44" r="6.1" fill="#3e6bc4"/><path d="M144.8 270.74 H141.4 V276.14 H144.8 M141.4 273.44 H144.4" fill="none" stroke="#1b1d26" stroke-width="1.3"/><circle cx="143" cy="291.21" r="6.1" fill="#3e6bc4"/><path d="M144.8 288.51 H141.4 V293.90999999999997 H144.8 M141.4 291.21 H144.4" fill="none" stroke="#1b1d26" stroke-width="1.3"/><circle cx="143" cy="308.97999999999996" r="6.1" fill="#3e6bc4"/><path d="M144.8 306.28 H141.4 V311.67999999999995 H144.8 M141.4 308.97999999999996 H144.4" fill="none" stroke="#1b1d26" stroke-width="1.3"/><circle cx="143" cy="326.75" r="6.1" fill="#3e6bc4"/><path d="M144.8 324.05 H141.4 V329.45 H144.8 M141.4 326.75 H144.4" fill="none" stroke="#1b1d26" stroke-width="1.3"/><circle cx="143" cy="344.52" r="6.1" fill="#3e6bc4"/><path d="M144.8 341.82 H141.4 V347.21999999999997 H144.8 M141.4 344.52 H144.4" fill="none" stroke="#1b1d26" stroke-width="1.3"/><circle cx="143" cy="362.28999999999996" r="6.1" fill="#3e6bc4"/><path d="M144.8 359.59 H141.4 V364.98999999999995 H144.8 M141.4 362.28999999999996 H144.4" fill="none" stroke="#1b1d26" stroke-width="1.3"/><circle cx="143" cy="380.06" r="6.1" fill="#3e6bc4"/><path d="M144.8 377.36 H141.4 V382.76 H144.8 M141.4 380.06 H144.4" fill="none" stroke="#1b1d26" stroke-width="1.3"/><circle cx="143" cy="397.83" r="6.1" fill="#3e6bc4"/><path d="M144.8 395.13 H141.4 V400.53 H144.8 M141.4 397.83 H144.4" fill="none" stroke="#1b1d26" stroke-width="1.3"/><path d="M105.3 412.4 L109 416.09999999999997 L112.7 412.4" fill="none" stroke="#a9a7b5" stroke-width="1.15"/><path d="M121 409.59999999999997 H126 L126.6 411.79999999999995 H133.3 V419.4 H121 Z" fill="#8a8598"/><circle cx="125.4" cy="415.59999999999997" r="1.35" fill="#2b2f3a"/><circle cx="143" cy="433.37" r="6.1" fill="#3e6bc4"/><path d="M143.2 429.17 H146 L143.9 432.47 H146.1 L140.8 437.97 L142.3 433.97 H139.9 Z" fill="#0e1016"/><circle cx="143" cy="451.14" r="6.1" fill="#3e6bc4"/><path d="M144.9 449.84 A2.3 2.3 0 1 0 144.9 452.44" fill="none" stroke="#15171e" stroke-width="1.7"/><path d="M106.2 464.10999999999996 L110 467.90999999999997 L106.2 471.71" fill="none" stroke="#a9a7b5" stroke-width="1.15"/><path d="M121 462.90999999999997 H126 L126.6 465.10999999999996 H133.3 V472.71 H121 Z" fill="#8a8598"/><circle cx="125.4" cy="468.90999999999997" r="1.35" fill="#2b2f3a"/><path d="M106.2 481.88 L110 485.68 L106.2 489.48" fill="none" stroke="#a9a7b5" stroke-width="1.15"/><path d="M121 480.68 H126 L126.6 482.88 H133.3 V490.48 H121 Z" fill="#8a8598"/><circle cx="125.4" cy="486.68" r="1.35" fill="#2b2f3a"/><path d="M106.2 499.65 L110 503.45 L106.2 507.25" fill="none" stroke="#a9a7b5" stroke-width="1.15"/><path d="M121 498.45 H126 L126.6 500.65 H133.3 V508.25 H121 Z" fill="#8a8598"/><circle cx="125.4" cy="504.45" r="1.35" fill="#2b2f3a"/><path d="M109.39999999999999 515.22 H116.0 V521.02 H106.8 V517.82 Z" fill="#8a8598"/><path d="M106.8 517.82 L109.39999999999999 515.22 V517.82 Z" fill="#c9c5d6"/><rect x="105" y="522.42" width="13.4" height="6.6" fill="#c94765"/><path d="M109.2 523.8199999999999 L107.4 525.72 L109.2 527.62 M112.6 523.8199999999999 L114.4 525.72 L112.6 527.62" fill="none" stroke="#1a1a1f" stroke-width="1.2"/><path d="M74.2 535.1899999999999 L78 538.99 L74.2 542.79" fill="none" stroke="#a9a7b5" stroke-width="1.15"/><path d="M89 533.99 H94 L94.6 536.1899999999999 H101.3 V539.79 H97.4 V543.79 H89 Z" fill="#8a8598"/><rect x="97.4" y="539.6899999999999" width="6.2" height="8" fill="#2b2f3a"/><rect x="98" y="540.29" width="5" height="1.1" fill="#b7a53b"/><rect x="98" y="542.1899999999999" width="5" height="1.1" fill="#b7a53b"/><rect x="98" y="544.0899999999999" width="5" height="1.1" fill="#b7a53b"/><rect x="98" y="545.99" width="5" height="1.1" fill="#b7a53b"/><path d="M61.2 551.26 H67.8 V563.06 H58.6 V553.86 Z" fill="#8a8598"/><path d="M58.6 553.86 L61.2 551.26 V553.86 Z" fill="#c9c5d6"/><circle cx="65.3" cy="560.3599999999999" r="3" fill="#333845" stroke="#8a8598" stroke-width="1.1"/><path d="M63.6 562.06 L67 558.66" stroke="#8a8598" stroke-width="1"/><path d="M61.4 568.5300000000001 H68.0 V574.33 H58.8 V571.1300000000001 Z" fill="#8a8598"/><path d="M58.8 571.1300000000001 L61.4 568.5300000000001 V571.1300000000001 Z" fill="#c9c5d6"/><rect x="57" y="576.13" width="13.4" height="5.6" fill="#d9707f"/><text x="63.7" y="581.23" font-family="Liberation Sans" font-weight="bold" font-size="5.6" fill="#1a1a1f" text-anchor="middle" textLength="12" lengthAdjust="spacingAndGlyphs">YML</text><path d="M57.5 597.1 L59.5 588.1 H61.8 L61.5 589.4 Q63.1 587.8000000000001 64.6 588.0 Q66.2 588.2 66.3 589.6 Q67.9 587.8000000000001 69.4 588.0 Q71.1 588.4 70.8 590.3000000000001 L69.5 597.1 H67.2 L68.3 591.2 Q68.4 590.1 67.5 590.2 Q66.5 590.4 66.1 591.6 L65.0 597.1 H62.7 L63.8 591.2 Q63.9 590.1 63.0 590.2 Q62.0 590.4 61.6 591.6 L60.5 597.1 Z" fill="#4675dc"/><path d="M25.3 607.87 L29 611.57 L32.7 607.87" fill="none" stroke="#a9a7b5" stroke-width="1.15"/><path d="M41 605.07 H46 L46.6 607.27 H53.3 V614.87 H41 Z" fill="#8a8598"/><rect x="48.6" y="611.87" width="6" height="6" fill="#3b7cf0" stroke="#2a2e38" stroke-width="0.8"/><path d="M41.3 625.64 L45 629.34 L48.7 625.64" fill="none" stroke="#a9a7b5" stroke-width="1.15"/><path d="M57 622.84 H62 L62.6 625.04 H69.3 V632.64 H57 Z" fill="#8a8598"/><rect x="64.6" y="629.64" width="6" height="6" fill="#3b7cf0" stroke="#2a2e38" stroke-width="0.8"/><path d="M57.3 643.41 L61 647.11 L64.7 643.41" fill="none" stroke="#a9a7b5" stroke-width="1.15"/><path d="M73 640.61 H78 L78.6 642.81 H85.3 V650.41 H73 Z" fill="#8a8598"/><path d="M73.3 661.18 L77 664.88 L80.7 661.18" fill="none" stroke="#a9a7b5" stroke-width="1.15"/><path d="M89 658.38 H94 L94.6 660.5799999999999 H101.3 V668.18 H89 Z" fill="#8a8598"/><path d="M89.3 678.95 L93 682.6500000000001 L96.7 678.95" fill="none" stroke="#a9a7b5" stroke-width="1.15"/><path d="M105 676.1500000000001 H110 L110.6 678.35 H117.3 V685.95 H105 Z" fill="#3d63bd"/><path d="M106.2 695.12 L110 698.9200000000001 L106.2 702.72" fill="none" stroke="#a9a7b5" stroke-width="1.15"/><path d="M121 693.9200000000001 H126 L126.6 696.12 H133.3 V703.72 H121 Z" fill="#8a8598"/><circle cx="125.4" cy="699.9200000000001" r="1.35" fill="#2b2f3a"/><path d="M125.39999999999999 710.69 H132.0 V716.49 H122.8 V713.2900000000001 Z" fill="#8a8598"/><path d="M122.8 713.2900000000001 L125.39999999999999 710.69 V713.2900000000001 Z" fill="#c9c5d6"/><rect x="121" y="717.89" width="13.4" height="6.6" fill="#c94765"/><path d="M125.2 719.29 L123.4 721.19 L125.2 723.09 M128.6 719.29 L130.4 721.19 L128.6 723.09" fill="none" stroke="#1a1a1f" stroke-width="1.2"/><path d="M73.5 739.26 L75.5 730.26 H77.8 L77.5 731.56 Q79.1 729.96 80.6 730.16 Q82.2 730.36 82.3 731.76 Q83.9 729.96 85.4 730.16 Q87.1 730.56 86.8 732.46 L85.5 739.26 H83.2 L84.3 733.36 Q84.4 732.26 83.5 732.36 Q82.5 732.56 82.1 733.76 L81.0 739.26 H78.7 L79.8 733.36 Q79.9 732.26 79.0 732.36 Q78.0 732.56 77.6 733.76 L76.5 739.26 Z" fill="#4675dc"/><path d="M41.3 750.03 L45 753.73 L48.7 750.03" fill="none" stroke="#a9a7b5" stroke-width="1.15"/><path d="M57 747.23 H62 L62.6 749.43 H69.3 V757.03 H57 Z" fill="#8a8598"/><rect x="64.6" y="754.03" width="6" height="6" fill="#3b7cf0" stroke="#2a2e38" stroke-width="0.8"/><rect x="349.7" y="50" width="1.1" height="712" fill="#394850"/><rect x="1208" y="50" width="1" height="712" fill="#2f3d42"/><path d="M346 155.22 V148.42 L350.3 144.92 L354.6 148.42 V155.22 Z" fill="#313646" stroke="#394850" stroke-width="1"/><path d="M348.4 150.82 H352.2" stroke="#394850" stroke-width="0.9"/><path d="M346 363.165 V356.365 L350.3 352.865 L354.6 356.365 V363.165 Z" fill="#313646" stroke="#394850" stroke-width="1"/><path d="M348.4 358.76500000000004 H352.2" stroke="#394850" stroke-width="0.9"/><path d="M346 594.2149999999999 V587.415 L350.3 583.915 L354.6 587.415 V594.2149999999999 Z" fill="#313646" stroke="#394850" stroke-width="1"/><path d="M348.4 589.8149999999999 H352.2" stroke="#394850" stroke-width="0.9"/><path d="M346 192.83 V199.63000000000002 L350.3 203.13000000000002 L354.6 199.63000000000002 V192.83 Z" fill="#313646" stroke="#394850" stroke-width="1"/><path d="M348.4 197.23000000000002 H352.2" stroke="#394850" stroke-width="0.9"/><path d="M346 400.775 V407.575 L350.3 411.075 L354.6 407.575 V400.775 Z" fill="#313646" stroke="#394850" stroke-width="1"/><path d="M348.4 405.17499999999995 H352.2" stroke="#394850" stroke-width="0.9"/><path d="M346 631.8249999999999 V638.6249999999999 L350.3 642.1249999999999 L354.6 638.6249999999999 V631.8249999999999 Z" fill="#313646" stroke="#394850" stroke-width="1"/><path d="M348.4 636.2249999999999 H352.2" stroke="#394850" stroke-width="0.9"/><path d="M1204.6 56 L1210.2 66.2 H1199 Z" fill="#e8b75a"/><path d="M1204.6 59.6 V62.8 M1204.6 64 V65" stroke="#2b2b2b" stroke-width="1.1"/><path d="M1229.2 62 L1232.6 58.6 L1236 62 M1247.6 58.8 L1251 62.2 L1254.4 58.8" fill="none" stroke="#a9a7b5" stroke-width="1.1"/><rect x="1249" y="138" width="12" height="1.6" fill="#e8b75a"/><rect x="1252" y="173" width="7" height="122" rx="3.5" fill="#4a4f5b"/><path d="M28 777.5 V768.5 M26 770.8 L28 768.5 L30 770.8 M28 775 H31.2 Q33.2 775 33.2 773 V770 M31 772.2 L33.2 770 L35.4 772.2" fill="none" stroke="#aeaabf" stroke-width="1.2"/><circle cx="78" cy="772" r="5.2" fill="#aeaabf"/><path d="M78 768.8 V772.8 M78 774.2 V775.4" stroke="#333845" stroke-width="1.5"/><path d="M149.5 768.4 H151 M149.5 771.8 H151 M149.5 775.2 H151 M152.6 768.4 H158.6 M152.6 771.8 H158.6 M152.6 775.2 H158.6" stroke="#aeaabf" stroke-width="1.2"/><circle cx="213.6" cy="772.2" r="5.2" fill="none" stroke="#d0363f" stroke-width="1.3"/><path d="M209.4 772.6 Q210.5 771.2 211.6 772.6 T213.8 772.6 T216 772.6 T218.2 772.6" fill="none" stroke="#d0363f" stroke-width="0.9"/><path d="M293 769.4 A5 5 0 1 0 288.6 777.4" fill="none" stroke="#aeaabf" stroke-width="1.2"/><path d="M289.6 768.2 L288.6 771.8" stroke="#aeaabf" stroke-width="0.9"/><path d="M289.8 770.8 L295.6 774.4 L289.8 778 Z" fill="#aeaabf" stroke="#333845" stroke-width="0.6"/><rect x="350" y="767" width="10.4" height="9.6" fill="#aeaabf"/><path d="M351.8 769.4 L353.8 771 L351.8 772.6 M354.6 774.2 H358" fill="none" stroke="#333845" stroke-width="1"/><path d="M420.4 770.4 L424.4 766.6 L426 768 L424.8 769.4 L432 776.4 L430.6 777.8 L423.4 770.8 L422 772 Z" fill="#aeaabf"/><path d="M478.4 767 H486.6 V769 H480.4 V776.6 H478.4 Z" fill="#aeaabf"/><rect x="481.2" y="770" width="8.8" height="8" fill="none" stroke="#aeaabf" stroke-width="1.1"/><path d="M484 771.8 V776.2 H486.8 M484 774 H486.2 M484 771.8 H486.6" fill="none" stroke="#aeaabf" stroke-width="0.8"/><path d="M580.6 777.2 Q579.6 770.6 584.6 768.8 Q588.4 767.6 591 766.8 Q591.2 772.4 588.2 775.2 Q585 778 580.6 777.2 Z" fill="#aeaabf"/><path d="M581.4 776.6 Q585 773 589.4 769.4" stroke="#333845" stroke-width="0.7" fill="none"/><circle cx="1092.2" cy="772.2" r="6" fill="#34a853"/><path d="M1091 769.6 L1093 768.4 V776.2" fill="none" stroke="#ffffff" stroke-width="1.4"/><g transform="translate(1177.6 766) scale(0.9) translate(-16.2 -2.8)"><path d="M16.2 2.8 C15.6 6.6 14.2 8.8 11.8 10.6 L10.2 15 L8.4 12.2 L7.2 11 L4.2 9.8 L7.6 8.2 C9.6 5.6 12.6 3.4 16.2 2.8 Z" fill="#9e9cab"/><ellipse cx="11.8" cy="7.4" rx="1" ry="0.7" fill="#e8f3d0"/></g><text x="1171.6" y="778.6" font-family="Liberation Sans" font-weight="bold" font-size="6" fill="#e8e8ee">JR</text><rect x="7.6" y="785.8" width="8.6" height="8.6" fill="none" stroke="#aeaabf" stroke-width="1"/><path d="M5.4 788.2 V796.6 H13.8" fill="none" stroke="#aeaabf" stroke-width="1"/><path d="M918.2 785.6 V796.4 M918.2 793.6 Q918.2 790.4 921.4 789.6 Q924.6 788.6 924.6 785.8" fill="none" stroke="#aeaabf" stroke-width="1.2"/><circle cx="918.2" cy="785.6" r="1.1" fill="#aeaabf"/><circle cx="918.2" cy="796.4" r="1.1" fill="#aeaabf"/><circle cx="924.6" cy="785.6" r="1.1" fill="#aeaabf"/><circle cx="925" cy="795.2" r="2.9" fill="#34a853"/><path d="M970.4 790 V787.2 Q970.4 784.4 973 784.4 Q975.6 784.4 975.6 787.2" fill="none" stroke="#aeaabf" stroke-width="1.2"/><rect x="972.6" y="789" width="7.6" height="6.6" rx="0.8" fill="#aeaabf"/><path d="M988.6 788.4 L994.6 783.8 L999.6 789.8 L996.6 796.8 L994 795 L995.8 791 L993.8 788.8 L990.8 791.6 Z" fill="#f05a3c"/><path d="M1015 786.4 H1019.8 M1015 790.6 H1019.8" stroke="#aeaabf" stroke-width="1.2"/><path d="M1015.4 784.4 H1012.6 Q1009 784.6 1009 788.6 Q1009 792.4 1012.6 792.6 H1015.4 Z" fill="#aeaabf"/><path d="M1010.6 791.4 Q1007.8 793.2 1009.2 795.6 Q1010.6 797.6 1013.6 797" fill="none" stroke="#aeaabf" stroke-width="1.1"/><circle cx="1037.6" cy="790.8" r="5.6" fill="#1e2026"/><circle cx="1037.6" cy="790.8" r="3.7" fill="none" stroke="#d6d6dc" stroke-width="1.2"/><path d="M1035 793.4 L1040.2 788.2" stroke="#d6d6dc" stroke-width="1.2"/><path d="M1 2 H9 M1.5 4.6 H8.5 M0.5 7.2 H9.5 M2 9.6 H7.6 V7.2 M5 0 V10.6" transform="translate(1149.4 787.3) scale(0.95 0.8)" fill="none" stroke="#c1c3ca" stroke-width="1.1"/><path d="M5 0 V1.8 M1 2.2 H9 M3 4 L4 7.8 M7 4 L6 7.8 M0.5 9.6 H9.5" transform="translate(1159.6 787.3) scale(0.95 0.8)" fill="none" stroke="#c1c3ca" stroke-width="1.1"/><path d="M0.5 1 H9.5 M4.2 1 V10.4 M4.6 4.2 L7.6 6.6" transform="translate(1250.8 787.3) scale(0.95 0.8)" fill="none" stroke="#c1c3ca" stroke-width="1.1"/><path d="M2.4 0.2 L1 3 M1.8 2 H8.8 M0.4 5.8 H9.6 M5 2 V10.6" transform="translate(1260.4 787.3) scale(0.95 0.8)" fill="none" stroke="#c1c3ca" stroke-width="1.1"/><path d="M4.6 70 H8.6 L9.4 71.6 H14 V78.2 H4.6 Z" fill="#b6b3c3"/><circle cx="9" cy="140.6" r="2.6" fill="none" stroke="#b6b3c3" stroke-width="1.1"/><path d="M4 140.6 H6.4 M11.6 140.6 H14" stroke="#b6b3c3" stroke-width="1.1"/><path d="M4 229 Q4.4 234.6 9.6 234.4 Q12 234.2 12.4 232 L8 229.6 Z" fill="#a9c4ea"/><circle cx="9.7" cy="227.2" r="3.9" fill="#8a8a8e"/><circle cx="9.7" cy="227.2" r="2.6" fill="#ffffff"/><circle cx="9.7" cy="226.6" r="1.5" fill="#4a94d0"/><path d="M12.2 230 L14.6 232.6" stroke="#9a9a9e" stroke-width="1.6"/><g fill="#b6b3c3"><rect x="9.4" y="552.4" width="3" height="3"/><rect x="5.2" y="556.8" width="3" height="3"/><rect x="9.4" y="556.8" width="3" height="3"/></g><path d="M9 625 L10.6 629 L14.6 629.2 L11.4 631.8 L12.6 636 L9 633.6 L5.4 636 L6.6 631.8 L3.4 629.2 L7.4 629 Z" fill="#b6b3c3"/><g transform="translate(15.2 689) scale(0.9) translate(-16.2 -2.8)"><path d="M16.2 2.8 C15.6 6.6 14.2 8.8 11.8 10.6 L10.2 15 L8.4 12.2 L7.2 11 L4.2 9.8 L7.6 8.2 C9.6 5.6 12.6 3.4 16.2 2.8 Z" fill="#86c426"/><ellipse cx="11.8" cy="7.4" rx="1" ry="0.7" fill="#e8f3d0"/></g><text x="9.6" y="701.4" font-family="Liberation Sans" font-weight="bold" font-size="6" fill="#e8e8ee" textLength="5.6" lengthAdjust="spacingAndGlyphs">JR</text><circle cx="9.3" cy="747.8" r="5.6" fill="#b6b3c3"/><path d="M7.6 745.8 L10.2 744.4 L12.4 745.2 L12.6 749.4 L11.4 749.6 L10.6 747.2 Z M5.6 747.4 L8.2 751.6 L7.2 752.4 L5 749.4 Z" fill="#333845"/><path d="M1266 43.2 L1267.4 35.6 H1269 L1268.8 36.6 Q1270 35.4 1271.2 35.6 Q1272.4 35.8 1272.4 36.8 Q1273.6 35.4 1274.8 35.6 Q1276.2 35.9 1276 37.4 L1274.8 43.2 H1273 L1274 38.2 Q1274 37.3 1273.3 37.4 Q1272.5 37.5 1272.2 38.5 L1271.2 43.2 H1269.4 L1270.4 38.2 Q1270.4 37.3 1269.7 37.4 Q1268.9 37.5 1268.6 38.5 L1267.6 43.2 Z" fill="#b6b3c3"/><g fill="none" stroke="#b6b3c3" stroke-width="1.1"><ellipse cx="1271" cy="102" rx="2.2" ry="5.6"/><path d="M1273.6 96.6 Q1276.4 102 1273.6 107.4 M1276 96.8 Q1278.6 102 1276 107.2"/></g><path d="M1271 176.4 A5.4 5.4 0 1 0 1276.4 181.8 L1271 181.8 Z" fill="#b6b3c3"/><path d="M1272.6 184 L1274.4 186 L1278 182.2" stroke="#b6b3c3" stroke-width="1.1" fill="none"/><rect x="1266.4" y="280.6" width="9.4" height="11.2" fill="#7cc46b"/><path d="M1266.4 283.4 H1275.8 M1266.4 286.2 H1275.8 M1266.4 289 H1275.8 M1269.6 280.6 V291.8 M1272.8 280.6 V291.8" stroke="#5fa353" stroke-width="0.6"/><path d="M1266.4 384.4 L1271 382 L1275.6 384.4 V390 L1271 392.4 L1266.4 390 Z" fill="#e5c64a"/><path d="M1271 387 L1275.6 384.4 V390 L1271 392.4 Z" fill="#7a4ec8"/><path d="M1266.4 384.4 L1271 382 L1275.6 384.4 L1271 387 Z" fill="#d9596a"/><rect x="1265.2" y="463" width="11" height="11" fill="#b9c3d6"/><path d="M1266.6 464.6 L1271 469.6 M1271 464.6 L1266.6 469.6" stroke="#e23a3a" stroke-width="1.2"/><path d="M1266.6 471 L1268.6 468.6 L1270.6 471 Z" fill="#3a52d8"/><path d="M1272.6 464.4 V472.4 H1275.4" fill="none" stroke="#2fb845" stroke-width="1.2"/><rect x="1264" y="613.6" width="12.4" height="12" fill="#e5201e"/><rect x="1267.2" y="615.8" width="6" height="7.6" rx="2.6" fill="none" stroke="#ffffff" stroke-width="1.3"/><g transform="translate(1277 731.4) scale(0.9) translate(-16.2 -2.8)"><path d="M16.2 2.8 C15.6 6.6 14.2 8.8 11.8 10.6 L10.2 15 L8.4 12.2 L7.2 11 L4.2 9.8 L7.6 8.2 C9.6 5.6 12.6 3.4 16.2 2.8 Z" fill="#86c426"/><ellipse cx="11.8" cy="7.4" rx="1" ry="0.7" fill="#e8f3d0"/></g><text x="1271.2" y="743.6" font-family="Liberation Sans" font-weight="bold" font-size="6" fill="#e8e8ee">JR</text></svg>
</body></html>
